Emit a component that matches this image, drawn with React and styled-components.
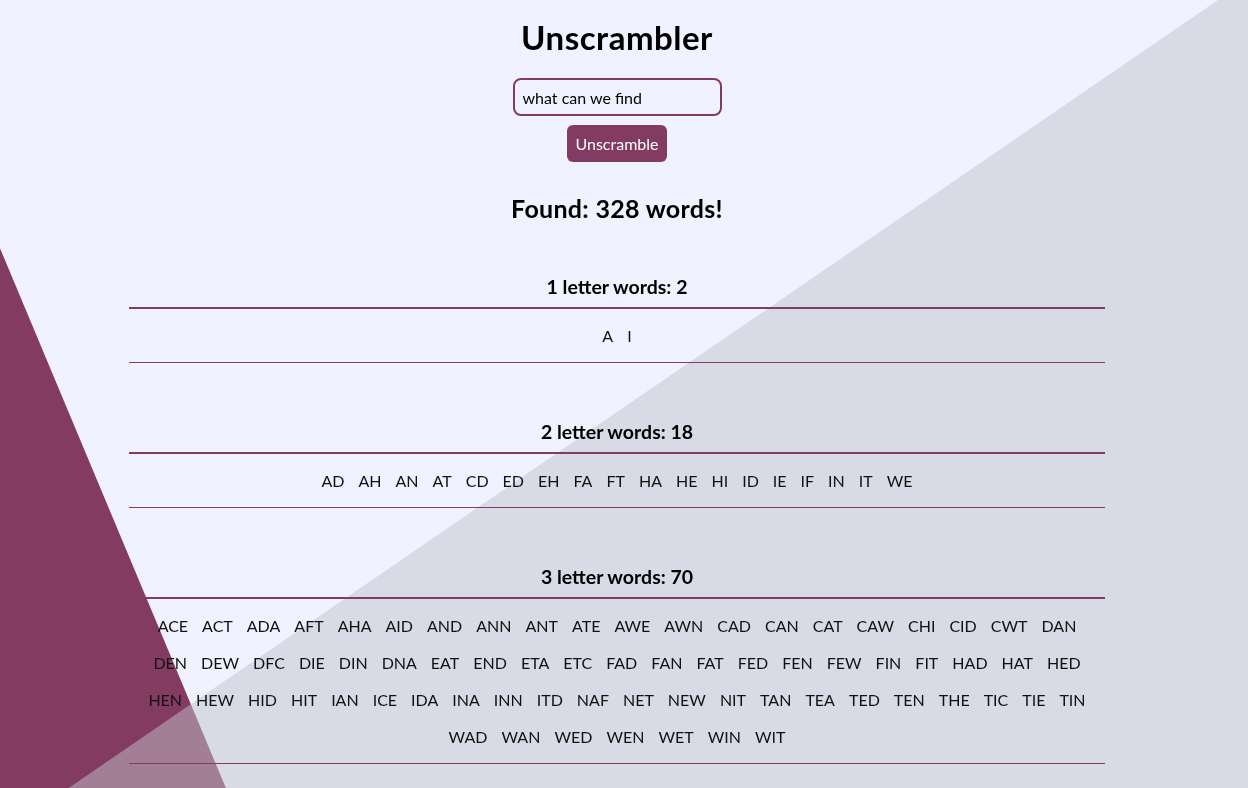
import React from 'react';
import styled, { createGlobalStyle } from 'styled-components';

const GlobalStyle = createGlobalStyle`
  html, body {
    margin: 0;
    padding: 0;
    overflow: hidden;
  }
  body {
    background-color: #f0f2ff;
    font-family: Lato, "Open Sans", sans-serif;
    color: #000;
  }
`;

const sections = [
  { size: 1, words: ['A', 'I'] },
  {
    size: 2,
    words: ['AD', 'AH', 'AN', 'AT', 'CD', 'ED', 'EH', 'FA', 'FT', 'HA', 'HE', 'HI', 'ID', 'IE', 'IF', 'IN', 'IT', 'WE'],
  },
  {
    size: 3,
    words: [
      'ACE', 'ACT', 'ADA', 'AFT', 'AHA', 'AID', 'AND', 'ANN', 'ANT', 'ATE', 'AWE', 'AWN', 'CAD', 'CAN', 'CAT', 'CAW', 'CHI', 'CID', 'CWT', 'DAN',
      'DEN', 'DEW', 'DFC', 'DIE', 'DIN', 'DNA', 'EAT', 'END', 'ETA', 'ETC', 'FAD', 'FAN', 'FAT', 'FED', 'FEN', 'FEW', 'FIN', 'FIT', 'HAD', 'HAT', 'HED',
      'HEN', 'HEW', 'HID', 'HIT', 'IAN', 'ICE', 'IDA', 'INA', 'INN', 'ITD', 'NAF', 'NET', 'NEW', 'NIT', 'TAN', 'TEA', 'TED', 'TEN', 'THE', 'TIC', 'TIE', 'TIN',
      'WAD', 'WAN', 'WED', 'WEN', 'WET', 'WIN', 'WIT',
    ],
  },
];

const App = () => {
  return (
    <>
      <GlobalStyle />
      <Backdrop>
        <MaroonShape />
        <GreyShape />
      </Backdrop>
      <Page>
        <Title>Unscrambler</Title>
        <SearchForm onSubmit={(e) => e.preventDefault()}>
          <SearchInput type="text" defaultValue="what can we find" />
          <UnscrambleButton type="submit">Unscramble</UnscrambleButton>
        </SearchForm>
        <Found>Found: 328 words!</Found>

        <Results>
          {sections.map((s) => (
            <Section key={s.size}>
              <SectionHeading>
                {s.size} letter words: {s.words.length}
              </SectionHeading>
              <WordList>
                {s.words.map((w) => (
                  <Word key={w}>{w}</Word>
                ))}
              </WordList>
            </Section>
          ))}
        </Results>
      </Page>
    </>
  );
};

const Backdrop = styled.div`
  position: fixed;
  inset: 0;
  z-index: -1;
  pointer-events: none;
`;

const MaroonShape = styled.div`
  position: absolute;
  inset: 0;
  background-color: #843b62;
  clip-path: polygon(0 31.5%, 18.1% 100%, 0 100%);
`;

const GreyShape = styled.div`
  position: absolute;
  inset: 0;
  background-color: rgba(192, 196, 203, 0.5);
  clip-path: polygon(97.6% 0, 100% 0, 100% 100%, 5.5% 100%);
`;

const Page = styled.main`
  width: calc(100% - 14px);
  display: flex;
  flex-direction: column;
  align-items: center;
  padding-top: 18px;
`;

const Title = styled.h1`
  margin: 0;
  font-size: 33px;
  line-height: 38px;
  letter-spacing: 0.5px;
  font-weight: 700;
`;

const SearchForm = styled.form`
  display: flex;
  flex-direction: column;
  align-items: center;
  gap: 9px;
  margin-top: 22px;
`;

const SearchInput = styled.input`
  box-sizing: border-box;
  width: 209px;
  height: 38px;
  padding: 0 8px;
  border: 2px solid #843b62;
  border-radius: 8px;
  background: transparent;
  font-family: inherit;
  font-size: 16px;
  color: #000;
  outline: none;
`;

const UnscrambleButton = styled.button`
  height: 37px;
  padding: 0 8px;
  border: none;
  border-radius: 6px;
  background-color: #843b62;
  color: #fff;
  font-family: inherit;
  font-size: 16px;
  cursor: pointer;
`;

const Found = styled.h2`
  margin: 32px 0 0;
  font-size: 25px;
  line-height: 29px;
  letter-spacing: 0.3px;
  font-weight: 700;
`;

const Results = styled.div`
  width: 976px;
  margin-top: 53px;
  display: flex;
  flex-direction: column;
  gap: 58px;
`;

const Section = styled.section`
  display: flex;
  flex-direction: column;
`;

const SectionHeading = styled.h3`
  margin: 0;
  padding-bottom: 9px;
  border-bottom: 2px solid #843b62;
  font-size: 19.5px;
  line-height: 22px;
  font-weight: 700;
  text-align: center;
`;

const WordList = styled.div`
  display: flex;
  flex-wrap: wrap;
  justify-content: center;
  padding: 8px 0;
  border-bottom: 1px solid #843b62;
`;

const Word = styled.span`
  padding: 0 7px;
  line-height: 37px;
  font-size: 16px;
  color: #111;
`;

export default App;
